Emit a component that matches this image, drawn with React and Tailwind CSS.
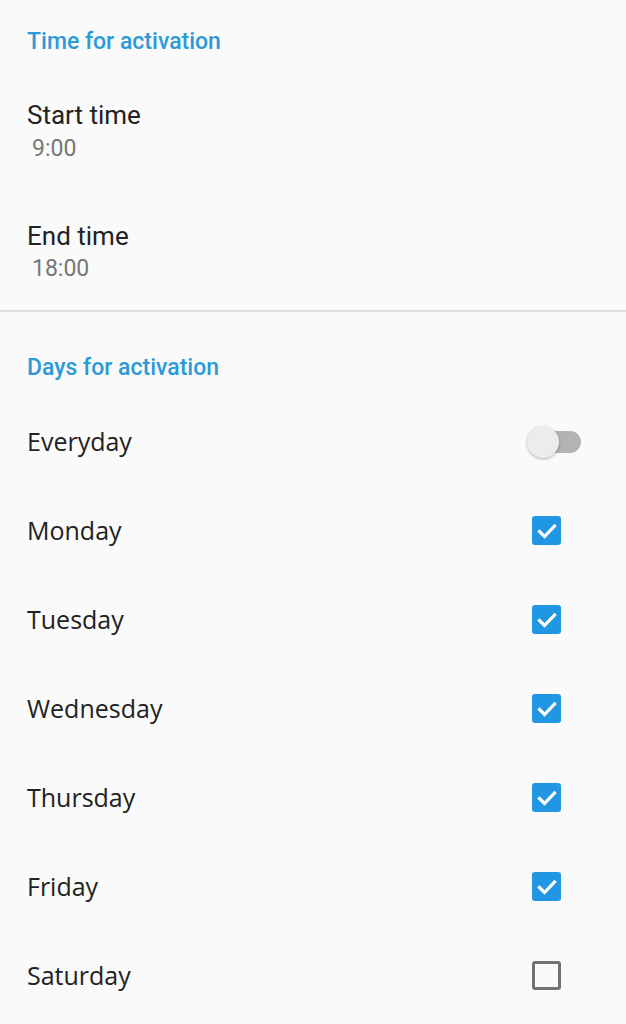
import { useState } from 'react';

const days = [
  { name: 'Monday', on: true },
  { name: 'Tuesday', on: true },
  { name: 'Wednesday', on: true },
  { name: 'Thursday', on: true },
  { name: 'Friday', on: true },
  { name: 'Saturday', on: false },
];

function Checkbox({ checked, onChange }) {
  return (
    <button
      onClick={onChange}
      className={
        checked
          ? 'w-[29px] h-[29px] rounded-[3px] bg-[#2196e3] flex items-center justify-center'
          : 'w-[29px] h-[29px] rounded-[3px] border-[3px] border-[#727272] bg-transparent'
      }
    >
      {checked && (
        <svg width="24" height="24" viewBox="0 0 24 24" fill="none">
          <path d="M4.5 12.5l5 5L19.5 7" stroke="white" strokeWidth="3.2" strokeLinecap="square" />
        </svg>
      )}
    </button>
  );
}

function Switch() {
  return (
    <div className="relative w-[54px] h-[32px] flex items-center">
      <div className="absolute right-0 w-[41px] h-[22px] rounded-full bg-[#b3b3b3]" />
      <div className="absolute left-0 w-[32px] h-[32px] rounded-full bg-[#ececec] shadow-[0_1px_3px_rgba(0,0,0,0.3)]" />
    </div>
  );
}

export default function App() {
  const [items, setItems] = useState(days);

  const toggle = (i) => {
    setItems(prev => prev.map((d, idx) => idx === i ? { ...d, on: !d.on } : d));
  };

  return (
    <div className="min-h-[1024px] bg-[#fafafa] font-['Roboto',sans-serif]">
      {/* Time section */}
      <div className="pl-[27px] pt-[27px] pb-[26px]">
        <div className="text-[23px] leading-[30px] font-medium text-[#2b9ad6]">Time for activation</div>
        <div className="mt-[41px]">
          <div className="text-[26px] leading-[34px] text-[#222]">Start time</div>
          <div className="pl-[5px] mt-[2px] text-[23px] leading-[30px] text-[#777]">9:00</div>
        </div>
        <div className="mt-[55px]">
          <div className="text-[26px] leading-[34px] text-[#222]">End time</div>
          <div className="pl-[5px] mt-[1px] text-[23px] leading-[30px] text-[#777]">18:00</div>
        </div>
      </div>
      <div className="h-[2px] bg-[#dedede]" />

      {/* Days section */}
      <div className="pt-[41px]">
        <div className="pl-[27px] text-[23px] leading-[30px] font-medium text-[#2b9ad6]">Days for activation</div>
        <div className="mt-[14px] flex flex-col font-['Open_Sans',sans-serif]">
          <div className="h-[89px] flex items-center justify-between pl-[27px] pr-[45px]">
            <span className="text-[25px] text-[#222]">Everyday</span>
            <Switch />
          </div>
          {items.map((d, i) => (
            <div key={d.name} className="h-[89px] flex items-center justify-between pl-[27px] pr-[65px]">
              <span className="text-[25px] text-[#222]">{d.name}</span>
              <Checkbox checked={d.on} onChange={() => toggle(i)} />
            </div>
          ))}
        </div>
      </div>
    </div>
  );
}
